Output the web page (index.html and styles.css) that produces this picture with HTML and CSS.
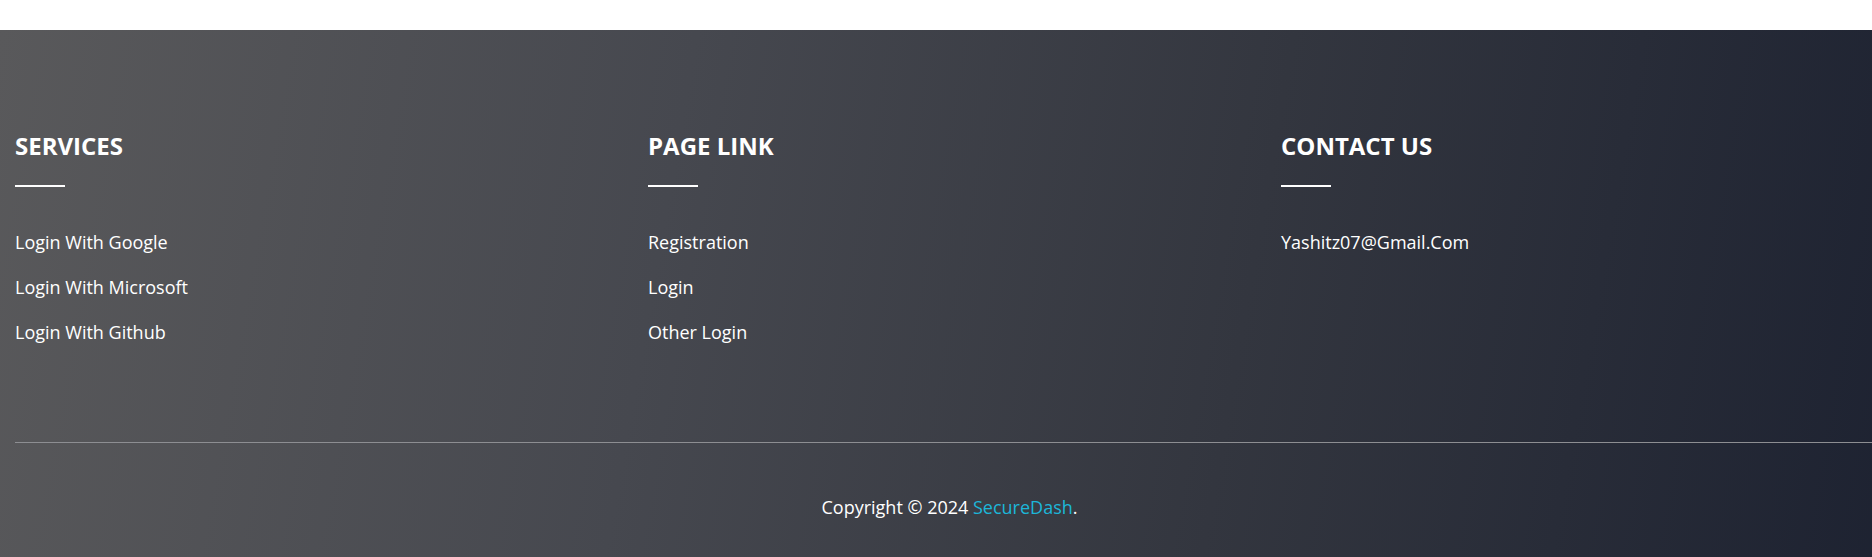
FILE: index.html
```html
<!DOCTYPE html>
<html lang="en">
<head>
<meta charset="utf-8">
<title>Footer</title>
<link rel="stylesheet" href="styles.css">
</head>
<body>
<div class="topbar"></div>
<footer class="footer">
  <div class="cols">
    <div class="col">
      <h4 class="col-title">SERVICES</h4>
      <ul class="links">
        <li>Login With Google</li>
        <li>Login With Microsoft</li>
        <li>Login With Github</li>
      </ul>
    </div>
    <div class="col">
      <h4 class="col-title">PAGE LINK</h4>
      <ul class="links">
        <li>Registration</li>
        <li>Login</li>
        <li>Other Login</li>
      </ul>
    </div>
    <div class="col">
      <h4 class="col-title">CONTACT US</h4>
      <ul class="links">
        <li>Yashitz07@Gmail.Com</li>
      </ul>
    </div>
  </div>
  <div class="rule"></div>
  <p class="copy">Copyright © 2024 <span class="brand">SecureDash</span>.</p>
</footer>
</body>
</html>
```

FILE: styles.css
```css
html, body {
  margin: 0;
  padding: 0;
  overflow: hidden;
  background: #fff;
}
body {
  font-family: "Open Sans", "Noto Sans", sans-serif;
  color: #fff;
}
.topbar {
  height: 30px;
  background: #fff;
}
.footer {
  width: 1899px;
  padding-top: 101px;
  padding-bottom: 38px;
  background: linear-gradient(100deg, #59595b 0%, #46484f 35%, #33363f 65%, #1d2231 100%);
}
.cols {
  display: grid;
  grid-template-columns: repeat(3, 1fr);
  padding-bottom: 87px;
}
.col {
  padding: 0 15px;
}
.col-title {
  margin: 0;
  font-size: 24px;
  line-height: 29px;
  font-weight: 700;
}
.col-title::after {
  content: "";
  display: block;
  width: 50px;
  height: 2px;
  background: #fff;
  margin-top: 25px;
}
.links {
  list-style: none;
  margin: 33px 0 0;
  padding: 0;
}
.links li {
  font-size: 18px;
  line-height: 45px;
  height: 45px;
}
.rule {
  height: 1px;
  margin: 0 15px;
  background: #8d8e92;
}
.copy {
  margin: 52px 0 0;
  text-align: center;
  font-size: 18px;
  line-height: 24px;
}
.brand {
  color: #1cb6d9;
}
```
